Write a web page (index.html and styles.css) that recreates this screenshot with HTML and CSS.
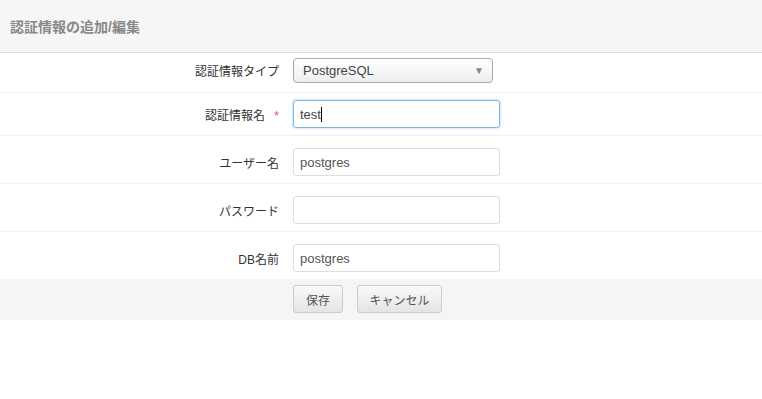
FILE: index.html
```html
<!DOCTYPE html>
<html lang="ja">
<head>
  <meta charset="UTF-8" />
  <meta name="viewport" content="width=device-width, initial-scale=1.0" />
  <title>認証情報の追加/編集</title>
  <link rel="stylesheet" href="styles.css">
</head>
<body>
  <div class="modal-header">
    <h4>認証情報の追加/編集</h4>
  </div>

  <div class="modal-body">
    <!-- 認証情報タイプ -->
    <div class="form-row first">
      <label class="form-label">認証情報タイプ</label>
      <div class="select-box">
        <span>PostgreSQL</span>
        <span class="arrow">▼</span>
      </div>
    </div>

    <div class="form-row second">
      <label class="form-label">認証情報名 <span class="required">*</span></label>
      <div class="field focus">test<span class="caret"></span></div>
    </div>

    <div class="form-row">
      <label class="form-label">ユーザー名</label>
      <div class="field">postgres</div>
    </div>

    <div class="form-row">
      <label class="form-label">パスワード</label>
      <div class="field"></div>
    </div>

    <div class="form-row last">
      <label class="form-label">DB名前</label>
      <div class="field">postgres</div>
    </div>
  </div>

  <div class="modal-footer">
    <button class="btn save">保存</button>
    <button class="btn cancel">キャンセル</button>
  </div>
</body>
</html>
```

FILE: styles.css
```css
body {
  margin: 0;
  font-family: 'Liberation Sans', 'Noto Sans CJK JP', sans-serif;
  font-size: 12px;
  color: #333;
  background-color: #fff;
}
.modal-header {
  height: 52px;
  background-color: #f6f6f6;
  border-bottom: 1px solid #dcdcdc;
  display: flex;
  align-items: center;
  padding: 0 10px;
}
.modal-header h4 {
  margin: 0;
  font-size: 14px;
  font-weight: bold;
  color: #888;
}
.form-row {
  display: flex;
  align-items: center;
  padding: 12px 0 7px;
  border-bottom: 1px solid #f0f0f0;
}
.form-row.first {
  padding: 5px 0 9px;
}
.form-row.second {
  padding-top: 7px;
}
.form-row.last {
  border-bottom: none;
}
.form-label {
  width: 293px;
  flex-shrink: 0;
  padding-right: 14px;
  text-align: right;
  box-sizing: border-box;
  font-size: 12px;
  color: #333;
}
.required {
  color: #e74c3c;
  margin-left: 6px;
}
.select-box {
  width: 200px;
  height: 25px;
  box-sizing: border-box;
  border: 1px solid #aaa;
  border-radius: 4px;
  background: linear-gradient(#fff, #eee);
  display: flex;
  align-items: center;
  justify-content: space-between;
  padding: 0 8px 0 9px;
  font-size: 13px;
  color: #444;
}
.select-box .arrow {
  font-size: 10px;
  color: #888;
}
.field {
  width: 207px;
  height: 28px;
  box-sizing: border-box;
  border: 1px solid #ddd;
  border-radius: 3px;
  padding: 0 6px;
  display: flex;
  align-items: center;
  font-size: 13px;
  color: #555;
}
.field.focus {
  border-color: #7cb7ec;
  box-shadow: 0 0 3px rgba(102, 175, 233, 0.6);
  color: #444;
}
.caret {
  display: inline-block;
  width: 1px;
  height: 15px;
  background-color: #000;
}
.modal-footer {
  background-color: #f5f5f5;
  padding: 6px 0 7px 293px;
  display: flex;
  gap: 14px;
}
.btn {
  height: 28px;
  border: 1px solid #ccc;
  border-radius: 3px;
  background: linear-gradient(#fafafa, #e4e4e4);
  font-family: 'Liberation Sans', 'Noto Sans CJK JP', sans-serif;
  font-size: 12px;
  color: #555;
  padding: 0;
}
.btn.save {
  width: 50px;
}
.btn.cancel {
  width: 85px;
}
```
